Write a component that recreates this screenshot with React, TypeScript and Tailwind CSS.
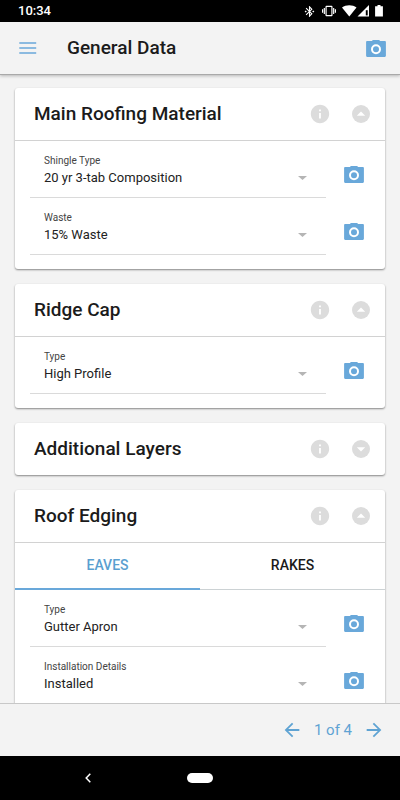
import React, { useId, useState } from "react";
import {
  MdArrowBack,
  MdArrowForward,
  MdBluetoothConnected,
  MdInfo,
  MdVibration,
} from "react-icons/md";

interface Field {
  label: string;
  value: string;
}

const mainFields: Field[] = [
  { label: "Shingle Type", value: "20 yr 3-tab Composition" },
  { label: "Waste", value: "15% Waste" },
];

const ridgeFields: Field[] = [{ label: "Type", value: "High Profile" }];

const edgingFields: Field[] = [
  { label: "Type", value: "Gutter Apron" },
  { label: "Installation Details", value: "Installed" },
];

const tabs = ["EAVES", "RAKES"];

const CameraIcon = () => (
  <svg width="20" height="17" viewBox="0 0 20 17" fill="none">
    <path
      d="M6.9 0h6.2l1 1h4.700c.6 0 1.100.5 1.100 1.100v13.700c0 .6-.5 1.100-1.100 1.100H1.200c-.6 0-1.100-.5-1.100-1.100V2.100C.1 1.500.6 1 1.200 1h4.700z"
      fill="#69a8da"
    />
    <circle cx="10" cy="9.200" r="4" stroke="#fff" strokeWidth="2" />
  </svg>
);

const ToggleIcon = ({ open }: { open: boolean }) => (
  <svg width="22" height="22" viewBox="0 0 22 22">
    <circle cx="11" cy="11" r="9" fill="#dcdcdc" />
    <path d={open ? "M6.800 12.700h8.400L11 8.500z" : "M6.800 9.300h8.400L11 13.500z"} fill="#fff" />
  </svg>
);

const StatusBar = () => (
  <div className="flex h-[22px] shrink-0 items-center justify-between bg-black pr-4 pl-[18px] text-white">
    <span className="text-[13px] leading-4 font-medium">10:34</span>
    <div className="flex items-center">
      <MdBluetoothConnected size={13} className="mr-1.5" />
      <MdVibration size={14} className="mr-1.5" />
      <svg width="42" height="12" viewBox="0 0 42 12" fill="#fff">
        <path d="M0 2.500C4-.6 10.500-.6 14.500 2.500L7.300 11.500z" />
        <path d="M27 0v11.500H15.500z" />
        <path d="M23.800 5.200h1.900v5.200h-1.900z" fill="#000" />
        <path d="M35.500 0h3v1.200h2.400v10.300h-7.800V1.200h2.400z" />
      </svg>
    </div>
  </div>
);

const FieldRow = ({ label, value }: Field) => {
  const id = useId();

  return (
    <div className="flex h-[57px] items-end pl-[15px]">
      <div className="h-full min-w-0 flex-1 border-b border-[#dadada] pt-[13px] pl-[14px]">
        <label htmlFor={id} className="block text-[10px] leading-[14px] text-[#444]">
          {label}
        </label>
        <div className="grid items-center">
          <select
            id={id}
            defaultValue={value}
            className="col-start-1 row-start-1 h-5 w-full appearance-none bg-transparent pr-9 text-[13px] leading-5 text-[#222] outline-none"
          >
            <option>{value}</option>
          </select>
          <svg
            width="9"
            height="4"
            viewBox="0 0 9 4"
            className="pointer-events-none col-start-1 row-start-1 mr-[19px] justify-self-end"
          >
            <path d="M0 0h9L4.500 4z" fill="#b5b5b5" />
          </svg>
        </div>
      </div>
      <button
        type="button"
        aria-label={`${label} photo`}
        className="mr-1 flex h-[47px] w-[55px] items-center justify-center"
      >
        <CameraIcon />
      </button>
    </div>
  );
};

interface CardProps {
  title: string;
  defaultOpen?: boolean;
  children?: React.ReactNode;
}

const Card = ({ title, defaultOpen = true, children }: CardProps) => {
  const [open, setOpen] = useState(defaultOpen);

  return (
    <section className="shrink-0 rounded-[3px] bg-white shadow-[0_1px_2px_rgba(0,0,0,0.45)]">
      <div className="flex h-[52px] items-center pr-[13px] pl-[19px]">
        <h2 className="flex-1 text-[19px] leading-6 font-medium text-[#1b1b1b]">{title}</h2>
        <button type="button" aria-label="Info" className="mr-[19px]">
          <MdInfo size={22} className="text-[#dcdcdc]" />
        </button>
        <button
          type="button"
          aria-label="Toggle section"
          aria-expanded={open}
          onClick={() => setOpen(!open)}
        >
          <ToggleIcon open={open} />
        </button>
      </div>
      {open && children && (
        <div className="border-t border-[#d2d2d2] pb-[14px]">{children}</div>
      )}
    </section>
  );
};

const EdgingTabs = () => {
  const [active, setActive] = useState("EAVES");

  return (
    <div role="tablist" className="flex h-[47px]">
      {tabs.map((tab) => (
        <button
          key={tab}
          type="button"
          role="tab"
          aria-selected={active === tab}
          onClick={() => setActive(tab)}
          className={`flex-1 pb-0.5 text-[14px] leading-4 font-medium ${
            active === tab
              ? "border-b-2 border-[#69a8da] text-[#5a9fd0]"
              : "border-b border-[#ccd2d4] text-[#1b1b1b]"
          }`}
        >
          {tab}
        </button>
      ))}
    </div>
  );
};

export default function App() {
  return (
    <div className="flex h-screen flex-col bg-[#f3f3f3] font-['Roboto',sans-serif]">
      <StatusBar />

      {/* Header */}
      <header className="z-10 flex h-[53px] shrink-0 items-center border-b border-[#a9a9a9] pr-[14px] pl-[19px] shadow-[0_1px_3px_rgba(0,0,0,0.25)]">
        <button type="button" aria-label="Menu">
          <svg width="18" height="12" viewBox="0 0 18 12" stroke="#69a8da" strokeWidth="1.500">
            <path d="M.3 1h16.900M.3 6h16.900M.3 11h16.900" />
          </svg>
        </button>
        <h1 className="ml-[30px] flex-1 text-[19px] leading-6 font-medium text-[#1b1b1b]">
          General Data
        </h1>
        <button type="button" aria-label="Camera">
          <CameraIcon />
        </button>
      </header>

      {/* Sections */}
      <main className="flex min-h-0 flex-1 flex-col gap-[15px] overflow-y-auto px-[15px] pt-[13px] [scrollbar-width:none]">
        <Card title="Main Roofing Material">
          {mainFields.map((field) => (
            <FieldRow key={field.label} {...field} />
          ))}
        </Card>
        <Card title="Ridge Cap">
          {ridgeFields.map((field) => (
            <FieldRow key={field.label} {...field} />
          ))}
        </Card>
        <Card title="Additional Layers" defaultOpen={false} />
        <Card title="Roof Edging">
          <EdgingTabs />
          {edgingFields.map((field) => (
            <FieldRow key={field.label} {...field} />
          ))}
        </Card>
      </main>

      {/* Pager */}
      <footer className="flex h-[53px] shrink-0 items-center justify-end gap-[11px] border-t border-[#c8c8c8] pr-[15px] text-[#5fa3d3]">
        <button type="button" aria-label="Previous page">
          <MdArrowBack size={22} />
        </button>
        <span className="text-[15px] leading-5">1 of 4</span>
        <button type="button" aria-label="Next page">
          <MdArrowForward size={22} />
        </button>
      </footer>

      {/* System navigation */}
      <nav className="grid h-11 shrink-0 grid-cols-3 items-center justify-items-center bg-black px-8">
        <button type="button" aria-label="Back">
          <svg width="6" height="10" viewBox="0 0 6 10" fill="none" stroke="#fff" strokeWidth="1.500">
            <path d="M5.300.800L1.200 5l4.100 4.200" />
          </svg>
        </button>
        <button type="button" aria-label="Home" className="h-[10px] w-[26px] rounded-full bg-white" />
      </nav>
    </div>
  );
}
